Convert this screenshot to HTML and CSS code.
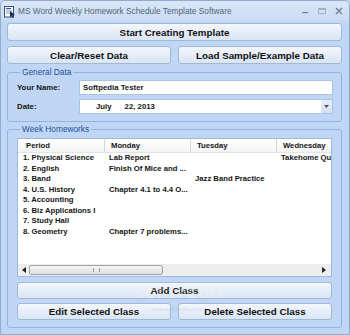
FILE: index.html
```html
<!DOCTYPE html>
<html lang="en">
<head>
    <meta charset="UTF-8">
    <title>MS Word Weekly Homework Schedule Template Software</title>
    <link rel="stylesheet" href="styles.css">
</head>
<body>
<div class="window">
    <div class="titlebar">
        <svg class="app-icon" width="13" height="13" viewBox="0 0 13 13">
            <rect x="1.5" y="1.5" width="9" height="10.5" fill="#fff" stroke="#3a4d7a"/>
            <rect x="3" y="3" width="5" height="1.2" fill="#2b59b8"/>
            <rect x="3" y="5.5" width="6" height="1" fill="#8a96b0"/>
            <rect x="3" y="7.5" width="6" height="1" fill="#8a96b0"/>
            <path d="M7 6 L12 10 L9.5 10.5 L10.5 12.5 L9.5 13 L8.5 11 L7 12.5 Z" fill="#1b2a5a"/>
        </svg>
        <span class="title">MS Word Weekly Homework Schedule Template Software</span>
        <div class="controls">
            <svg width="8" height="8" viewBox="0 0 8 8"><rect x="1" y="5" width="6" height="1.2" fill="#6c7c93"/></svg>
            <svg width="8" height="8" viewBox="0 0 8 8"><rect x="0.5" y="1.5" width="7" height="5" fill="none" stroke="#a3b1c4"/><rect x="0.5" y="1.5" width="7" height="1.5" fill="#a3b1c4"/></svg>
            <svg width="8" height="8" viewBox="0 0 8 8"><path d="M1 1 L7 7 M7 1 L1 7" stroke="#6c7c93" stroke-width="1.2"/></svg>
        </div>
    </div>

    <div class="client">
        <button class="btn">Start Creating Template</button>
        <div class="btn-row">
            <button class="btn">Clear/Reset Data</button>
            <button class="btn">Load Sample/Example Data</button>
        </div>

        <fieldset class="group general">
            <legend>General Data</legend>
            <div class="field">
                <label>Your Name:</label>
                <div class="input">Softpedia Tester</div>
            </div>
            <div class="field">
                <label>Date:</label>
                <div class="input date">
                    <span class="month">July</span><span>22, 2013</span>
                    <span class="drop">
                        <svg width="5" height="3" viewBox="0 0 5 3"><path d="M0 0 H5 L2.5 3 Z" fill="#4a5568"/></svg>
                    </span>
                </div>
            </div>
        </fieldset>

        <fieldset class="group homeworks">
            <legend>Week Homeworks</legend>
            <div class="listview">
                <div class="lv-grid lv-head">
                    <div>Period</div><div>Monday</div><div>Tuesday</div><div>Wednesday</div>
                </div>
                <div class="lv-body">
                    <div class="lv-grid lv-row"><div>1. Physical Science</div><div>Lab Report</div><div></div><div>Takehome Quiz</div></div>
                    <div class="lv-grid lv-row"><div>2. English</div><div>Finish Of Mice and ...</div><div></div><div></div></div>
                    <div class="lv-grid lv-row"><div>3. Band</div><div></div><div>Jazz Band Practice</div><div></div></div>
                    <div class="lv-grid lv-row"><div>4. U.S. History</div><div>Chapter 4.1 to 4.4 O...</div><div></div><div></div></div>
                    <div class="lv-grid lv-row"><div>5. Accounting</div><div></div><div></div><div></div></div>
                    <div class="lv-grid lv-row"><div>6. Biz Applications I</div><div></div><div></div><div></div></div>
                    <div class="lv-grid lv-row"><div>7. Study Hall</div><div></div><div></div><div></div></div>
                    <div class="lv-grid lv-row"><div>8. Geometry</div><div>Chapter 7 problems...</div><div></div><div></div></div>
                </div>
                <div class="hscroll">
                    <svg width="4" height="6" viewBox="0 0 4 6"><path d="M4 0 V6 L0 3 Z" fill="#222"/></svg>
                    <div class="track"><div class="thumb"><span class="grip"></span></div></div>
                    <svg width="4" height="6" viewBox="0 0 4 6"><path d="M0 0 V6 L4 3 Z" fill="#222"/></svg>
                </div>
            </div>
            <button class="btn">Add Class</button>
            <div class="btn-row">
                <button class="btn">Edit Selected Class</button>
                <button class="btn">Delete Selected Class</button>
            </div>
        </fieldset>
    </div>

    <div class="watermark">SOFTPEDIA</div>
    <div class="watermark-url">www.softpedia.com</div>
</div>
</body>
</html>
```

FILE: styles.css
```css
html, body {
    margin: 0;
    padding: 0;
    background-color: #bfd7f5;
}
.window {
    position: relative;
    width: 350px;
    height: 335px;
    box-sizing: border-box;
    border: 1px solid #93abcc;
    border-radius: 5px 5px 0 0;
    background-color: #bfd7f5;
    font-family: "Liberation Sans", Arial, sans-serif;
    color: #151515;
    overflow: hidden;
}
.titlebar {
    height: 20px;
    display: flex;
    align-items: center;
    padding-left: 2px;
    background: linear-gradient(#d9e6f6, #c9dcf4);
}
.app-icon {
    margin-right: 2px;
}
.title {
    font-size: 8.3px;
    color: #55647a;
}
.controls {
    margin-left: auto;
    display: flex;
    gap: 9px;
    padding-right: 6px;
}
.client {
    padding: 2px 7px 0 6px;
    display: flex;
    flex-direction: column;
}
.btn {
    display: block;
    width: 100%;
    height: 18px;
    padding: 0;
    border: 1px solid #a2b8d7;
    border-radius: 3px;
    background: linear-gradient(#f4f7fc, #e6edf7 50%, #dae5f3);
    font-family: "Liberation Sans", Arial, sans-serif;
    font-size: 9.8px;
    font-weight: bold;
    color: #111;
}
.btn-row {
    display: flex;
    gap: 7px;
    margin-top: 5px;
}
.group {
    margin: 3px 0 0 0;
    padding: 3px 8px 7px 9px;
    border: 1px solid #94b3dc;
    border-radius: 3px;
    min-width: 0;
}
.group legend {
    padding: 0 2px;
    margin-left: 3px;
    font-size: 8.3px;
    line-height: 10px;
    color: #1f4d96;
}
.field {
    display: flex;
    align-items: center;
    height: 15px;
    margin-bottom: 4px;
}
.field:last-child {
    margin-bottom: 0;
}
.field label {
    width: 62px;
    font-size: 7.8px;
    font-weight: bold;
}
.input {
    flex: 1;
    height: 15px;
    box-sizing: border-box;
    border: 1px solid #aac3e4;
    background-color: #fff;
    padding-left: 3px;
    font-size: 7.8px;
    font-weight: bold;
    line-height: 13px;
    display: flex;
}
.date {
    padding-left: 16px;
}
.month {
    margin-right: 13px;
}
.drop {
    width: 11px;
    margin: 0 0 0 auto;
    background: linear-gradient(#e8eef7, #d5e0ef);
    display: flex;
    align-items: center;
    justify-content: center;
}
.homeworks {
    margin-top: 2px;
    padding-top: 4px;
    padding-right: 9px;
}
.listview {
    height: 139px;
    box-sizing: border-box;
    border: 1px solid #9cbae0;
    background-color: #fff;
    display: flex;
    flex-direction: column;
    overflow: hidden;
    margin-bottom: 5px;
}
.lv-grid {
    display: grid;
    grid-template-columns: 87px 86px 86px 86px;
    font-size: 7.7px;
    font-weight: bold;
    white-space: nowrap;
}
.lv-grid > div {
    overflow: hidden;
}
.lv-head {
    height: 13px;
    line-height: 13px;
    border-bottom: 1px solid #e3e3e3;
    background: linear-gradient(#ffffff, #f3f4f6);
}
.lv-head > div {
    padding-left: 6px;
    border-right: 1px solid #d6d6d6;
}
.lv-head > div:first-child {
    padding-left: 8px;
}
.lv-body {
    flex: 1;
}
.lv-row {
    height: 10.5px;
    line-height: 10.5px;
}
.lv-row > div {
    padding-left: 4px;
}
.lv-row > div:first-child {
    padding-left: 5px;
}
.hscroll {
    height: 12px;
    background-color: #eeeeee;
    display: flex;
    align-items: center;
    padding: 0 5px 0 4px;
    gap: 3px;
}
.track {
    flex: 1;
    height: 10px;
}
.thumb {
    width: 134px;
    height: 10px;
    box-sizing: border-box;
    border: 1px solid #9da3aa;
    border-radius: 2px;
    background: linear-gradient(#f4f4f4, #dedede);
    display: flex;
    justify-content: center;
    align-items: center;
}
.grip {
    width: 5px;
    height: 4px;
    border-left: 1px solid #999;
    border-right: 1px solid #999;
}
.homeworks .btn {
    height: 17px;
}
.homeworks .btn-row {
    margin-top: 4px;
}
.watermark {
    position: absolute;
    left: 134px;
    top: 285px;
    font-size: 13px;
    font-weight: bold;
    letter-spacing: 2px;
    color: rgba(255, 255, 255, 0.3);
}
.watermark-url {
    position: absolute;
    left: 150px;
    top: 305px;
    font-size: 6px;
    color: rgba(150, 160, 175, 0.3);
}
```
